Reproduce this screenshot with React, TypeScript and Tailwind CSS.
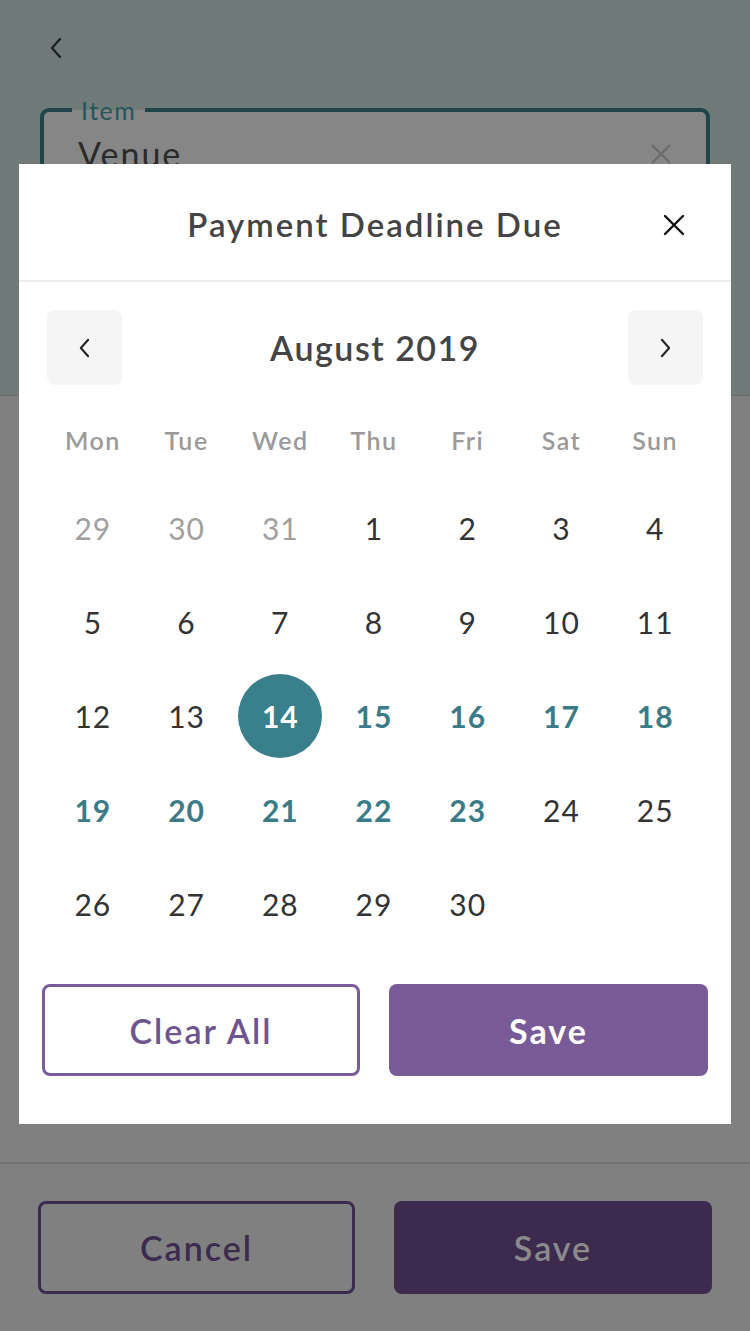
import React from "react";

const font = { fontFamily: "Lato, 'Open Sans', sans-serif" };

const weekdays = ["Mon", "Tue", "Wed", "Thu", "Fri", "Sat", "Sun"];

type Cell = { d: string; kind: "muted" | "normal" | "range" | "selected" | "empty" };

const cells: Cell[] = [
  { d: "29", kind: "muted" },
  { d: "30", kind: "muted" },
  { d: "31", kind: "muted" },
  ...["1", "2", "3", "4", "5", "6", "7", "8", "9", "10", "11", "12", "13"].map(
    (d) => ({ d, kind: "normal" as const })
  ),
  { d: "14", kind: "selected" },
  ...["15", "16", "17", "18", "19", "20", "21", "22", "23"].map((d) => ({
    d,
    kind: "range" as const,
  })),
  ...["24", "25", "26", "27", "28", "29", "30"].map((d) => ({
    d,
    kind: "normal" as const,
  })),
  { d: "", kind: "empty" },
  { d: "", kind: "empty" },
];

function Chevron({ dir, className }: { dir: "left" | "right"; className?: string }) {
  return (
    <svg viewBox="0 0 12 22" className={className} fill="none">
      <path
        d={dir === "left" ? "M10 2 L2 11 L10 20" : "M2 2 L10 11 L2 20"}
        stroke="currentColor"
        strokeWidth="2.2"
        strokeLinecap="round"
        strokeLinejoin="round"
      />
    </svg>
  );
}

function XIcon({ className }: { className?: string }) {
  return (
    <svg viewBox="0 0 24 24" className={className} fill="none">
      <path d="M3 3 L21 21 M21 3 L3 21" stroke="currentColor" strokeWidth="2.4" strokeLinecap="round" />
    </svg>
  );
}

export default function App() {
  return (
    <div className="relative w-[750px] h-[1331px] overflow-hidden bg-[#808080]" style={font}>
      {/* top header region (dimmed) */}
      <div className="h-[396px] bg-[#707b79] border-b border-[#6a6f6e] px-[40px] pt-[36px]">
        <Chevron dir="left" className="w-[12px] h-[24px] ml-[10px] text-[#1c1f1f]" />
        <div className="relative mt-[48px] h-[110px] rounded-[9px] border-[4px] border-[#1f4548] bg-[#868686]">
          <span className="absolute -top-[17px] left-[28px] px-[9px] bg-[linear-gradient(to_bottom,#707b79_50%,#868686_50%)] text-[25px] leading-[30px] tracking-[1.5px] text-[#24575a]">
            Item
          </span>
          <div className="flex items-center justify-between pl-[34px] pr-[34px] pt-[22px]">
            <span className="text-[34px] leading-[40px] tracking-[2px] text-[#2a2a2a]">Venue</span>
            <XIcon className="w-[22px] h-[22px] text-[#6a6a6a]" />
          </div>
        </div>
      </div>

      {/* bottom bar (dimmed) */}
      <div className="absolute left-0 right-0 top-[1162px] bottom-0 border-t-2 border-[#737373] bg-[#808080] flex gap-[39px] px-[38px] pt-[37px]">
        <div className="w-[317px] h-[93px] rounded-[8px] border-[3px] border-[#3c2b4e] flex items-center justify-center text-[34px] tracking-[2px] font-semibold text-[#3c2b4e]">
          Cancel
        </div>
        <div className="w-[318px] h-[93px] rounded-[8px] bg-[#3c2b4e] flex items-center justify-center text-[34px] tracking-[2px] font-semibold text-[#8b8b8b]">
          Save
        </div>
      </div>

      {/* modal */}
      <div className="absolute left-[19px] top-[164px] w-[712px] h-[960px] bg-white flex flex-col">
        <div className="relative h-[118px] pt-[6px] border-b-2 border-[#ebebeb] flex items-center justify-center">
          <span className="text-[33px] font-semibold tracking-[2px] text-[#444444]">Payment Deadline Due</span>
          <XIcon className="absolute right-[45px] top-[49px] w-[24px] h-[24px] text-[#111111]" />
        </div>

        <div className="mt-[28px] mx-[28px] flex items-center justify-between">
          <div className="w-[75px] h-[75px] rounded-[8px] bg-[#f5f5f5] flex items-center justify-center">
            <Chevron dir="left" className="w-[11px] h-[22px] text-[#222222]" />
          </div>
          <span className="text-[34px] font-semibold tracking-[1.5px] text-[#444444]">August 2019</span>
          <div className="w-[75px] h-[75px] rounded-[8px] bg-[#f5f5f5] flex items-center justify-center">
            <Chevron dir="right" className="w-[11px] h-[22px] text-[#222222]" />
          </div>
        </div>

        <div className="ml-[27px] mr-[29px] mt-[31px] grid grid-cols-7 h-[50px] items-center">
          {weekdays.map((w) => (
            <div key={w} className="text-center text-[25px] font-semibold tracking-[1.5px] text-[#9a9a9a]">
              {w}
            </div>
          ))}
        </div>

        <div className="ml-[27px] mr-[29px] mt-[15px] grid grid-cols-7">
          {cells.map((c, i) => (
            <div key={i} className="h-[94px] flex items-center justify-center tracking-[1px]">
              {c.kind === "selected" ? (
                <div className="w-[84px] h-[84px] rounded-full bg-[#3a7f8c] flex items-center justify-center text-[30px] font-bold text-white">
                  {c.d}
                </div>
              ) : c.kind === "muted" ? (
                <span className="text-[30px] text-[#a0a0a0]">{c.d}</span>
              ) : c.kind === "range" ? (
                <span className="text-[30px] font-bold text-[#3b7b88]">{c.d}</span>
              ) : c.kind === "normal" ? (
                <span className="text-[30px] text-[#333333]">{c.d}</span>
              ) : null}
            </div>
          ))}
        </div>

        <div className="mx-[23px] mt-[33px] flex gap-[29px]">
          <div className="w-[318px] h-[92px] rounded-[8px] border-[3px] border-[#7a5c9a] flex items-center justify-center text-[34px] tracking-[2px] font-semibold text-[#6f5590]">
            Clear All
          </div>
          <div className="w-[319px] h-[92px] rounded-[8px] bg-[#785b97] flex items-center justify-center text-[34px] tracking-[2px] font-bold text-white">
            Save
          </div>
        </div>
      </div>
    </div>
  );
}
